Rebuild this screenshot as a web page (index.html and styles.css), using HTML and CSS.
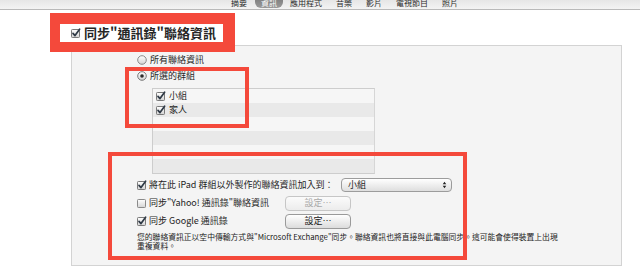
FILE: index.html
```html
<!DOCTYPE html>
<html lang="zh-Hant">
<head>
<meta charset="utf-8">
<title>資訊</title>
<link rel="stylesheet" href="styles.css">
</head>
<body>
<svg class="defs" width="0" height="0" aria-hidden="true">
  <defs>
    <linearGradient id="boxfill" x1="0" y1="0" x2="0" y2="1">
      <stop offset="0" stop-color="#ffffff"/>
      <stop offset="1" stop-color="#d4d4d4"/>
    </linearGradient>
    <symbol id="chk" viewBox="0 0 10 10">
      <rect x="0.5" y="1.5" width="8" height="8" rx="0.8" fill="url(#boxfill)" stroke="#7a7a7a"/>
      <path d="M2 5.4 L4 7.6 L8.6 1.2" fill="none" stroke="#2f3a46" stroke-width="1.7" stroke-linecap="round" stroke-linejoin="round"/>
    </symbol>
    <symbol id="unchk" viewBox="0 0 10 10">
      <rect x="0.5" y="1.5" width="8" height="8" rx="0.8" fill="url(#boxfill)" stroke="#8a8a8a"/>
    </symbol>
    <symbol id="radio-off" viewBox="0 0 10 10">
      <circle cx="5" cy="5" r="4.3" fill="url(#boxfill)" stroke="#8a8a8a"/>
    </symbol>
    <symbol id="radio-on" viewBox="0 0 10 10">
      <circle cx="5" cy="5" r="4.3" fill="url(#boxfill)" stroke="#7a7a7a"/>
      <circle cx="5" cy="5" r="1.8" fill="#2c2c2c"/>
    </symbol>
  </defs>
</svg>
<div class="page">
  <nav class="tabs">
    <span class="tab">摘要</span>
    <span class="tab tab-active">資訊</span>
    <span class="tab">應用程式</span>
    <span class="tab">音樂</span>
    <span class="tab">影片</span>
    <span class="tab">電視節目</span>
    <span class="tab">照片</span>
  </nav>

  <main class="content">
    <h1 class="section-title">
      <svg class="cb cb-big"><use href="#chk"/></svg>
      <span>同步"通訊錄"聯絡資訊</span>
    </h1>

    <section class="panel">
      <div class="radio-row">
        <svg class="radio"><use href="#radio-off"/></svg>
        <span>所有聯絡資訊</span>
      </div>
      <div class="radio-row">
        <svg class="radio"><use href="#radio-on"/></svg>
        <span>所選的群組</span>
      </div>

      <ul class="group-list">
        <li class="group-row"><svg class="cb"><use href="#chk"/></svg><span>小組</span></li>
        <li class="group-row"><svg class="cb"><use href="#chk"/></svg><span>家人</span></li>
        <li class="group-row"></li>
        <li class="group-row"></li>
        <li class="group-row"></li>
        <li class="group-row"></li>
      </ul>

      <div class="options">
        <div class="opt-row">
          <svg class="cb"><use href="#chk"/></svg>
          <span class="opt-label opt-label-wide">將在此 iPad 群組以外製作的聯絡資訊加入到：</span>
          <div class="select">
            <span>小組</span>
            <svg class="select-arrows" viewBox="0 0 6 10"><path d="M3 1 L5.2 4 H0.8 Z M3 9 L5.2 6 H0.8 Z" fill="#222"/></svg>
          </div>
        </div>
        <div class="opt-row">
          <svg class="cb"><use href="#unchk"/></svg>
          <span class="opt-label">同步"Yahoo! 通訊錄"聯絡資訊</span>
          <button class="btn" disabled>設定⋯</button>
        </div>
        <div class="opt-row">
          <svg class="cb"><use href="#chk"/></svg>
          <span class="opt-label">同步 Google 通訊錄</span>
          <button class="btn">設定⋯</button>
        </div>
        <p class="note"><span class="note-line">您的聯絡資訊正以空中傳輸方式與"Microsoft Exchange"同步。聯絡資訊也將直接與此電腦同步。這可能會使得裝置上出現</span><span class="note-line">重複資料。</span></p>
      </div>
    </section>
  </main>

  <div class="mark mark-title"></div>
  <div class="mark mark-groups"></div>
  <div class="mark mark-options"></div>
</div>
</body>
</html>
```

FILE: styles.css
```css
* { box-sizing: border-box; }

html, body {
  margin: 0;
  padding: 0;
  background: #ffffff;
}

body {
  font-family: "Noto Sans CJK TC", "Noto Sans", sans-serif;
  color: #1e1e1e;
  width: 640px;
  height: 278px;
  overflow: hidden;
}

.defs { position: absolute; }

.page {
  position: relative;
  width: 640px;
  height: 278px;
}

/* top tab strip */
.tabs {
  display: flex;
  height: 10px;
  padding-left: 224px;
  background: linear-gradient(#e6e6e6, #f3f3f3);
  border-bottom: 1px solid #b9b9b9;
  overflow: hidden;
}

.tab {
  display: block;
  margin-top: -2px;
  height: 10px;
  padding: 0 7px;
  font-size: 8px;
  line-height: 9px;
  color: #2a2a2a;
  white-space: nowrap;
}

.tab-active {
  margin-left: 1px;
  padding: 0 6px;
  height: 10px;
  background: linear-gradient(#7d7d7d, #9a9a9a);
  color: #ffffff;
  border-radius: 0 0 6px 6px;
}

/* main */
.content {
  padding: 14px 18px 0 71px;
}

.section-title {
  display: flex;
  align-items: center;
  gap: 3px;
  height: 18px;
  margin: 0 0 3px 0;
  font-size: 13px;
  line-height: 18px;
  font-weight: 700;
  color: #262626;
  white-space: nowrap;
}

.cb {
  width: 10px;
  height: 10px;
  flex: none;
  display: block;
}

.cb-big {
  width: 10px;
  height: 10px;
}

.panel {
  width: 551px;
  height: 221px;
  padding: 6px 0 0 65px;
  background: #f4f4f4;
  border: 1px solid #d3d3d3;
}

.radio-row {
  display: flex;
  align-items: center;
  gap: 3px;
  height: 16px;
  font-size: 9px;
  line-height: 16px;
  white-space: nowrap;
}

.radio {
  width: 10px;
  height: 10px;
  display: block;
  flex: none;
}

.group-list {
  list-style: none;
  margin: 4px 0 0 15px;
  padding: 0;
  width: 223px;
  border: 1px solid #cdcdcd;
  border-right-color: #d6d6d6;
}

.group-row {
  display: flex;
  align-items: center;
  gap: 3px;
  height: 14px;
  padding-left: 3px;
  font-size: 9px;
  line-height: 14px;
  background: #f6f6f6;
}

.group-row:nth-child(even) {
  background: #e9e9e9;
}

.options {
  margin-top: 2px;
}

.opt-row {
  display: flex;
  align-items: center;
  height: 18px;
  font-size: 9px;
  line-height: 18px;
  white-space: nowrap;
}

.opt-row .cb {
  margin-right: 2px;
}

.opt-label {
  width: 134px;
  margin-right: 2px;
}

.opt-label-wide {
  width: 190px;
}

.select {
  display: flex;
  align-items: center;
  justify-content: space-between;
  width: 111px;
  height: 14px;
  padding: 0 4px 0 6px;
  border: 1px solid #9c9c9c;
  border-radius: 4px;
  background: linear-gradient(#ffffff, #dedede);
  font-size: 9px;
  line-height: 12px;
}

.select-arrows {
  width: 5px;
  height: 8px;
  display: block;
}

.btn {
  width: 66px;
  height: 15px;
  padding: 0;
  border: 1px solid #9a9a9a;
  border-radius: 4px;
  background: linear-gradient(#ffffff, #dcdcdc);
  font-family: inherit;
  font-size: 9px;
  line-height: 12px;
  color: #202020;
}

.btn:disabled {
  border-color: #c6c6c6;
  background: linear-gradient(#fbfbfb, #ececec);
  color: #a8a8a8;
}

.note {
  margin: 3px 0 0 0;
  font-size: 7.8px;
  color: #222;
  white-space: nowrap;
}

.note-line {
  display: block;
  height: 8.5px;
  line-height: 8.5px;
}

/* red annotation boxes drawn over the screenshot */
.mark {
  position: absolute;
  border: 4px solid #f4493b;
  pointer-events: none;
}

.mark-title {
  left: 50px;
  top: 13px;
  width: 185px;
  height: 39px;
  border-width: 11px 12px 10px 10px;
}

.mark-groups {
  left: 125px;
  top: 67px;
  width: 124px;
  height: 61px;
}

.mark-options {
  left: 108px;
  top: 152px;
  width: 359px;
  height: 108px;
}
```
